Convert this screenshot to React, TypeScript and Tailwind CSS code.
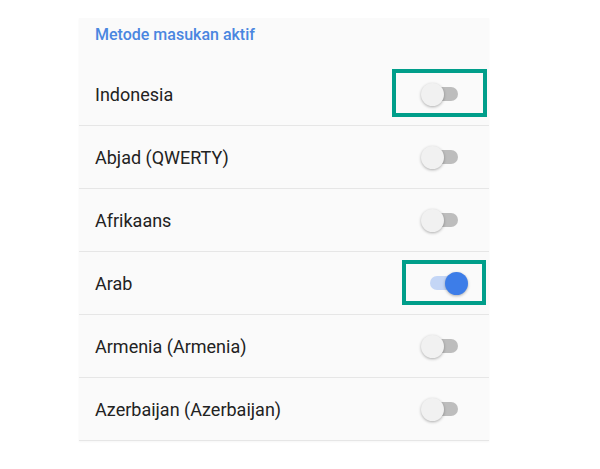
import React from 'react';

interface ToggleProps {
  on?: boolean;
}

// switch: thumb overlaps the track through a negative margin
function Toggle({ on = false }: ToggleProps) {
  if (on) {
    return (
      <div className="flex items-center w-[47px] h-[24px] pl-[9px] shrink-0">
        <div className="w-[34px] h-[14px] rounded-full bg-[#c4d6f6]" />
        <div className="relative z-10 -ml-[19px] w-[23px] h-[23px] rounded-full bg-[#3d7de8] shadow-[0_1px_3px_rgba(0,0,0,0.3)]" />
      </div>
    );
  }
  return (
    <div className="flex items-center w-[47px] h-[24px] shrink-0">
      <div className="relative z-10 w-[23px] h-[23px] rounded-full bg-[#f1f1f1] shadow-[0_1px_3px_rgba(0,0,0,0.3)]" />
      <div className="-ml-[20px] w-[34px] h-[14px] rounded-full bg-[#bdbdbd]" />
    </div>
  );
}

const languages = [
  { name: 'Indonesia', on: false },
  { name: 'Abjad (QWERTY)', on: false },
  { name: 'Afrikaans', on: false },
  { name: 'Arab', on: true },
  { name: 'Armenia (Armenia)', on: false },
  { name: 'Azerbaijan (Azerbaijan)', on: false },
];

export default function App() {
  return (
    <div
      className="relative w-[600px] h-[469px] bg-white overflow-hidden pt-[18px] pl-[79px]"
      style={{ fontFamily: 'Roboto, "Noto Sans", sans-serif' }}
    >
      <div className="w-[410px] bg-[#fafafa] shadow-[0_1px_2px_rgba(0,0,0,0.04)]">
        <div className="h-[45px] pt-[5px] pl-[16px] text-[16px] leading-[24px] font-medium text-[#4a86e0]">
          Metode masukan aktif
        </div>
        <ul>
          {languages.map((lang) => (
            <li
              key={lang.name}
              className="h-[63px] flex items-center justify-between pl-[16px] pr-[21px] border-b-[1.5px] border-[#e6e6e6]"
            >
              <span className="text-[18px] text-[#222222]">{lang.name}</span>
              <Toggle on={lang.on} />
            </li>
          ))}
        </ul>
      </div>

      {/* highlight boxes drawn over the list */}
      <div className="absolute left-[392px] top-[69px] w-[95px] h-[48px] border-[4px] border-[#009e8a]" />
      <div className="absolute left-[402px] top-[260px] w-[84px] h-[45px] border-[4px] border-[#009e8a]" />
    </div>
  );
}
